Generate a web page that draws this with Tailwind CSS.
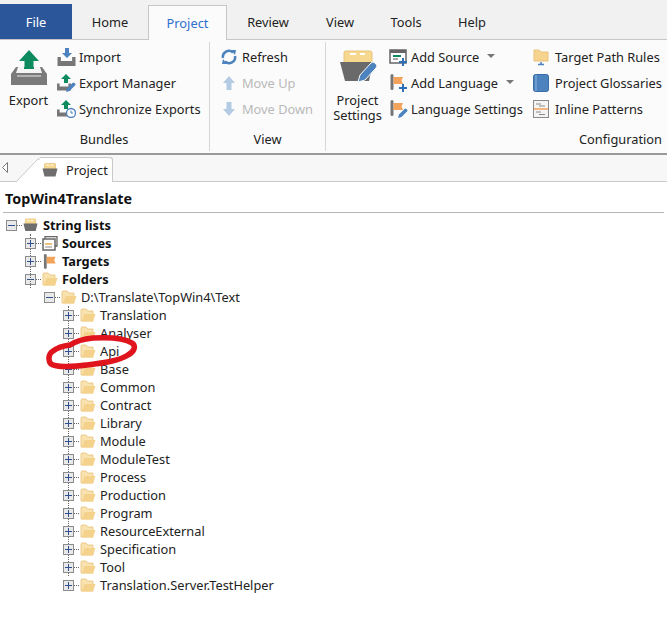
<!DOCTYPE html>
<html lang="en">
<head>
<meta charset="UTF-8">
<title>Project</title>
<script src="https://cdn.jsdelivr.net/npm/@tailwindcss/browser@4"></script>
</head>
<body class="bg-white text-[#222] font-['Noto_Sans',sans-serif] text-[12.8px] leading-[18px] whitespace-nowrap w-[667px] h-[626px] overflow-hidden relative">
<svg class="hidden">
  <symbol id="folder" viewBox="0 0 16 14"><path d="M1 13 L1 2 Q1 1 2 1 L6 1 L8 3 L13 3 L13 13 Z" fill="#f8e2b0" stroke="#e8c27a" stroke-width=".8"/><path d="M2 13.500 L4.500 6 L15.500 6 L13 13.500 Z" fill="#f4d28c"/></symbol>
  <symbol id="project" viewBox="0 0 16 14"><path d="M2.500 6 L2.500 1.500 Q2.500 .5 3.500 .5 L12.500 .5 Q13.500 .5 13.500 1.500 L13.500 6 Z" fill="#f6d88f" stroke="#e9c27b" stroke-width=".8"/><path d="M4.500 2 H7 M8.500 2 H11" stroke="#fff"/><path d="M.5 5.500 L15.500 5.500 L13.500 13.500 L2.500 13.500 Z" fill="#6e6e6e"/></symbol>
  <symbol id="flag" viewBox="0 0 16 16"><rect x="1.500" y="0" width="3" height="16" rx="1.500" fill="#777"/><path d="M4.500 3 L14 3 L12.500 6.500 L14 10 L4.500 10 Z" fill="#f4a35b"/></symbol>
  <symbol id="up" viewBox="0 0 16 16"><path d="M8 1 L14 8 L10.500 8 L10.500 15 L5.500 15 L5.500 8 L2 8 Z" fill="currentColor"/></symbol>
  <symbol id="tray" viewBox="0 0 16 8"><path d="M0 0 L3 0 L3 3.500 L13 3.500 L13 0 L16 0 L16 8 L0 8 Z" fill="#777"/></symbol>
  <symbol id="pencil" viewBox="0 0 10 10"><path d="M0 10 L1 6.500 L6.500 1 Q7.500 0 8.500 1 L9 1.500 Q10 2.500 9 3.500 L3.500 9 Z" fill="#4c82bd"/></symbol>
</svg>

<!-- tabs -->
<div class="h-[40px] bg-[#f1f1f1] border-b border-[#c6c6c6] flex items-end relative">
  <div class="w-[72px] h-[35px] bg-[#2b579a] text-white flex items-center justify-center">File</div>
  <div class="w-[76px] h-[35px] flex items-center justify-center">Home</div>
  <div class="w-[79px] h-[35px] -mb-px bg-[#fbfbfb] border border-b-0 border-[#c6c6c6] text-[#2f6fcf] flex items-center justify-center">Project</div>
  <div class="w-[82px] h-[35px] flex items-center justify-center">Review</div>
  <div class="w-[62px] h-[35px] flex items-center justify-center">View</div>
  <div class="w-[70px] h-[35px] flex items-center justify-center">Tools</div>
  <div class="w-[62px] h-[35px] flex items-center justify-center">Help</div>
</div>

<!-- ribbon -->
<div class="h-[113px] bg-[#fbfbfb] flex">
  <div class="w-[210px] border-r border-[#d6d6d6] my-[2px] flex flex-col">
    <div class="flex h-[93px]">
      <div class="w-[57px] flex flex-col items-center pt-[8px]">
        <svg class="w-[38px] h-[36px]" viewBox="0 0 38 36"><path d="M19 0 L29 11 L23.500 11 L23.500 19 L14.500 19 L14.500 11 L9 11 Z" fill="#0e8a5f"/><path d="M1 35 L1 24 L6 17 L32 17 L37 24 L37 35 Z" fill="#7a7a7a"/><path d="M8 17 L30 17 L32 23 L6 23 Z" fill="#f4f4f4"/><path d="M14 17 H24 V19 H14 Z" fill="#0e8a5f"/><path d="M7 26 H31" stroke="#d8d8d8" stroke-width="1.200"/></svg>
        <span class="mt-[5px]">Export</span>
      </div>
      <div class="flex flex-col pt-[6px] gap-[8px]">
        <div class="flex h-[18px] items-center gap-[3px]"><svg class="w-[19px] h-[18px]" viewBox="0 0 19 18"><path d="M8 0 H12 V5 H15 L10 10 L5 5 H8 Z" fill="#4c82bd"/><use href="#tray" x="0" y="9" width="19" height="9"/></svg>Import</div>
        <div class="flex h-[18px] items-center gap-[3px]"><svg class="w-[19px] h-[18px]" viewBox="0 0 19 18"><path d="M9 0 L14 5 H11 V9 H7 V5 H4 Z" fill="#0e8a5f"/><use href="#tray" x="0" y="9" width="14" height="8"/><use href="#pencil" x="9" y="8" width="10" height="10"/></svg>Export Manager</div>
        <div class="flex h-[18px] items-center gap-[3px]"><svg class="w-[19px] h-[18px]" viewBox="0 0 19 18"><path d="M9 0 L14 5 H11 V9 H7 V5 H4 Z" fill="#0e8a5f"/><use href="#tray" x="0" y="9" width="14" height="8"/><circle cx="14" cy="13" r="4.500" fill="#fff" stroke="#4c82bd" stroke-width="1.300"/><path d="M14 10.500 V13 H16" stroke="#4c82bd" fill="none"/></svg>Synchronize Exports</div>
      </div>
    </div>
    <div class="text-center pr-[1px] mt-[-5px]">Bundles</div>
  </div>
  <div class="w-[116px] border-r border-[#d6d6d6] my-[2px] flex flex-col">
    <div class="flex flex-col pt-[6px] gap-[8px] pl-[11px] h-[93px]">
      <div class="flex h-[18px] items-center gap-[5px]"><svg class="w-[16px] h-[16px]" viewBox="0 0 16 16" fill="none" stroke="#4c82bd" stroke-width="2.500"><path d="M2 9 A6 6 0 0 1 12 3.500"/><path d="M14 7 A6 6 0 0 1 4 12.500"/><path d="M10 1 L15 1 L14 6 Z M6 15 L1 15 L2 10 Z" fill="#4c82bd" stroke="none"/></svg>Refresh</div>
      <div class="flex h-[18px] items-center gap-[5px] text-[#b9b9b9]"><svg class="w-[16px] h-[16px] text-[#b3cbe3]"><use href="#up"/></svg>Move Up</div>
      <div class="flex h-[18px] items-center gap-[5px] text-[#b9b9b9]"><svg class="w-[16px] h-[16px] text-[#b3cbe3] rotate-180"><use href="#up"/></svg>Move Down</div>
    </div>
    <div class="text-center mt-[-5px]">View</div>
  </div>
  <div class="flex-1 my-[2px] flex flex-col">
    <div class="flex h-[93px]">
      <div class="w-[63px] flex flex-col items-center pt-[7px] leading-[15px] text-center">
        <svg class="w-[38px] h-[34px] mb-[10px] ml-[2px]" viewBox="0 0 38 34"><path d="M4 14 L4 4 Q4 2 6 2 L30 2 Q32 2 32 4 L32 14 Z" fill="#f6d88f" stroke="#e9c27b"/><path d="M10 5 H16 M20 5 H25" stroke="#fff" stroke-width="2"/><path d="M0 13 L33 13 L29 32 L5 32 Z" fill="#6a6a6a"/><path d="M18 33 L20 26 L31 14 Q33 12 35 14 L36 15 Q38 17 36 19 L25 31 Z" fill="#4c82bd" stroke="#fbfbfb"/></svg>
        <span>Project<br>Settings</span>
      </div>
      <div class="w-[144px] flex flex-col pt-[6px] gap-[8px]">
        <div class="flex h-[18px] items-center gap-[3px]"><svg class="w-[19px] h-[18px]" viewBox="0 0 19 18"><rect x="1" y="2" width="16" height="13" fill="#fff" stroke="#666" stroke-width="1.500"/><rect x="1" y="2" width="16" height="3" fill="#666"/><path d="M4 8 H12" stroke="#0e8a5f" stroke-width="2"/><path d="M4 11 H9" stroke="#888" stroke-width="1.500"/><path d="M14 10 V18 M10 14 H18" stroke="#2f6fb5" stroke-width="2"/></svg>Add Source<span class="ml-[5px] mt-[-3px] border-x-[4px] border-x-transparent border-t-[4px] border-t-[#777]"></span></div>
        <div class="flex h-[18px] items-center gap-[3px]"><svg class="w-[19px] h-[18px]" viewBox="0 0 19 18"><use href="#flag" width="16" height="16"/><path d="M14 10 V18 M10 14 H18" stroke="#2f6fb5" stroke-width="2"/></svg>Add Language<span class="ml-[5px] mt-[-3px] border-x-[4px] border-x-transparent border-t-[4px] border-t-[#777]"></span></div>
        <div class="flex h-[18px] items-center gap-[3px]"><svg class="w-[19px] h-[18px]" viewBox="0 0 19 18"><use href="#flag" width="16" height="16"/><use href="#pencil" x="9" y="8" width="10" height="10"/></svg>Language Settings</div>
      </div>
      <div class="flex flex-col pt-[6px] gap-[8px]">
        <div class="flex h-[18px] items-center gap-[6px]"><svg class="w-[16px] h-[18px]" viewBox="0 0 16 18"><path d="M1 2 H6 L8 4 H15 V13 H1 Z" fill="#f5d48f" stroke="#e9c27b"/><path d="M8 14 V16 M5 16.500 H11" stroke="#4c82bd" stroke-width="1.500"/></svg>Target Path Rules</div>
        <div class="flex h-[18px] items-center gap-[6px]"><svg class="w-[16px] h-[18px]" viewBox="0 0 16 18"><rect x="0.500" y="0.500" width="15" height="17" rx="2" fill="#4c82bd" stroke="#3a6da5"/><path d="M3 1 V17" stroke="#8fb4da"/></svg>Project Glossaries</div>
        <div class="flex h-[18px] items-center gap-[6px]"><svg class="w-[16px] h-[18px]" viewBox="0 0 16 18"><rect x="0.500" y="0.500" width="15" height="17" fill="#f4f4f4" stroke="#8a8a8a"/><path d="M3 4 H8 M6 6 H12" stroke="#8a8a8a"/><path d="M1 9 H15" stroke="#f4a35b" stroke-width="1.500"/><path d="M3 12 H8 M6 14.500 H12" stroke="#8a8a8a"/></svg>Inline Patterns</div>
      </div>
    </div>
    <div class="text-right pr-[5px] mt-[-5px]">Configuration</div>
  </div>
</div>
<div class="h-[2px] bg-[#9a9a9a]"></div>

<!-- document tab -->
<div class="h-[27px] bg-[#f7f7f7] border-b border-[#c9c9c9] relative flex items-end">
  <svg class="absolute left-[2px] top-[7px] w-[6px] h-[11px]" viewBox="0 0 6 11"><path d="M5.500 .5 L.5 5.500 L5.500 10.500 Z" fill="#fff" stroke="#777"/></svg>
  <svg class="absolute left-[16px] top-[2px] w-[24px] h-[25px]" viewBox="0 0 24 25"><path d="M0 25 L22 2 L24 2 V25 Z" fill="#fff"/><path d="M0 25 L22 2 L24 2" fill="none" stroke="#c9c9c9"/></svg>
  <div class="absolute left-[40px] top-[2px] w-[73px] h-[25px] bg-white border border-l-0 border-b-0 border-[#c9c9c9] rounded-tr-[3px] flex items-center">
    <svg class="w-[16px] h-[14px] ml-[2px]"><use href="#project"/></svg><span class="ml-[8px]">Project</span>
  </div>
</div>

<!-- tree panel -->
<div class="px-[3px] pt-[7px]">
  <div class="font-bold text-[14.300px] leading-[20px] pl-[2px] pb-[3px] border-b border-[#b5b5b5] text-[#111]">TopWin4Translate</div>
</div>
<div class="relative pl-[6px] pt-[3px]">
  <div class="relative">
    <div class="flex h-[18px] items-center font-bold text-[#111]"><span class="w-[11px] h-[11px] bg-[#e9e9e9] border border-[#8c8c8c] flex items-center justify-center"><i class="w-[7px] h-px bg-[#2f4f8f]"></i></span><i class="w-[5px] border-t border-dotted border-[#666]"></i><svg class="w-[15px] h-[14px] ml-px mr-[5px]"><use href="#project"/></svg>String lists</div>
    <div class="absolute left-[24px] top-[18px] h-[54px] border-l border-dotted border-[#666]"></div>
    <div class="pl-[19px]">
      <div class="flex h-[18px] items-center font-bold text-[#111]"><span class="w-[11px] h-[11px] bg-[#e9e9e9] border border-[#8c8c8c] flex items-center justify-center relative"><i class="w-[7px] h-px bg-[#2f4f8f]"></i><i class="absolute w-px h-[7px] bg-[#2f4f8f]"></i></span><i class="w-[5px] border-t border-dotted border-[#666]"></i><svg class="w-[16px] h-[15px] ml-px mr-[4px]" viewBox="0 0 16 15"><path d="M3 3 V.5 H15 V10 H13" fill="none" stroke="#666" stroke-width="1.300"/><rect x="1" y="3" width="12" height="11" fill="#fff" stroke="#666" stroke-width="1.500"/><path d="M3 8 H10" stroke="#e9c27b" stroke-width="2"/><path d="M3 11 H10" stroke="#888"/></svg>Sources</div>
      <div class="flex h-[18px] items-center font-bold text-[#111]"><span class="w-[11px] h-[11px] bg-[#e9e9e9] border border-[#8c8c8c] flex items-center justify-center relative"><i class="w-[7px] h-px bg-[#2f4f8f]"></i><i class="absolute w-px h-[7px] bg-[#2f4f8f]"></i></span><i class="w-[5px] border-t border-dotted border-[#666]"></i><svg class="w-[16px] h-[15px] ml-px mr-[4px]"><use href="#flag"/></svg>Targets</div>
      <div class="flex h-[18px] items-center font-bold text-[#111]"><span class="w-[11px] h-[11px] bg-[#e9e9e9] border border-[#8c8c8c] flex items-center justify-center"><i class="w-[7px] h-px bg-[#2f4f8f]"></i></span><i class="w-[5px] border-t border-dotted border-[#666]"></i><svg class="w-[16px] h-[14px] ml-px mr-[4px]"><use href="#folder"/></svg>Folders</div>
      <div class="pl-[19px]">
        <div class="flex h-[18px] items-center"><span class="w-[11px] h-[11px] bg-[#e9e9e9] border border-[#8c8c8c] flex items-center justify-center"><i class="w-[7px] h-px bg-[#2f4f8f]"></i></span><i class="w-[5px] border-t border-dotted border-[#666]"></i><svg class="w-[16px] h-[14px] ml-px mr-[4px]"><use href="#folder"/></svg>D:\Translate\TopWin4\Text</div>
        <div class="relative pl-[19px]">
          <div class="absolute left-[24px] top-0 h-[270px] border-l border-dotted border-[#666]"></div>
          <div class="flex h-[18px] items-center relative"><span class="w-[11px] h-[11px] bg-[#e9e9e9] border border-[#8c8c8c] flex items-center justify-center relative"><i class="w-[7px] h-px bg-[#2f4f8f]"></i><i class="absolute w-px h-[7px] bg-[#2f4f8f]"></i></span><i class="w-[5px] border-t border-dotted border-[#666]"></i><svg class="w-[16px] h-[14px] ml-px mr-[4px]"><use href="#folder"/></svg>Translation</div>
          <div class="flex h-[18px] items-center relative"><span class="w-[11px] h-[11px] bg-[#e9e9e9] border border-[#8c8c8c] flex items-center justify-center relative"><i class="w-[7px] h-px bg-[#2f4f8f]"></i><i class="absolute w-px h-[7px] bg-[#2f4f8f]"></i></span><i class="w-[5px] border-t border-dotted border-[#666]"></i><svg class="w-[16px] h-[14px] ml-px mr-[4px]"><use href="#folder"/></svg>Analyser</div>
          <div class="flex h-[18px] items-center relative"><span class="w-[11px] h-[11px] bg-[#e9e9e9] border border-[#8c8c8c] flex items-center justify-center relative"><i class="w-[7px] h-px bg-[#2f4f8f]"></i><i class="absolute w-px h-[7px] bg-[#2f4f8f]"></i></span><i class="w-[5px] border-t border-dotted border-[#666]"></i><svg class="w-[16px] h-[14px] ml-px mr-[4px]"><use href="#folder"/></svg>Api</div>
          <div class="flex h-[18px] items-center relative"><span class="w-[11px] h-[11px] bg-[#e9e9e9] border border-[#8c8c8c] flex items-center justify-center relative"><i class="w-[7px] h-px bg-[#2f4f8f]"></i><i class="absolute w-px h-[7px] bg-[#2f4f8f]"></i></span><i class="w-[5px] border-t border-dotted border-[#666]"></i><svg class="w-[16px] h-[14px] ml-px mr-[4px]"><use href="#folder"/></svg>Base</div>
          <div class="flex h-[18px] items-center relative"><span class="w-[11px] h-[11px] bg-[#e9e9e9] border border-[#8c8c8c] flex items-center justify-center relative"><i class="w-[7px] h-px bg-[#2f4f8f]"></i><i class="absolute w-px h-[7px] bg-[#2f4f8f]"></i></span><i class="w-[5px] border-t border-dotted border-[#666]"></i><svg class="w-[16px] h-[14px] ml-px mr-[4px]"><use href="#folder"/></svg>Common</div>
          <div class="flex h-[18px] items-center relative"><span class="w-[11px] h-[11px] bg-[#e9e9e9] border border-[#8c8c8c] flex items-center justify-center relative"><i class="w-[7px] h-px bg-[#2f4f8f]"></i><i class="absolute w-px h-[7px] bg-[#2f4f8f]"></i></span><i class="w-[5px] border-t border-dotted border-[#666]"></i><svg class="w-[16px] h-[14px] ml-px mr-[4px]"><use href="#folder"/></svg>Contract</div>
          <div class="flex h-[18px] items-center relative"><span class="w-[11px] h-[11px] bg-[#e9e9e9] border border-[#8c8c8c] flex items-center justify-center relative"><i class="w-[7px] h-px bg-[#2f4f8f]"></i><i class="absolute w-px h-[7px] bg-[#2f4f8f]"></i></span><i class="w-[5px] border-t border-dotted border-[#666]"></i><svg class="w-[16px] h-[14px] ml-px mr-[4px]"><use href="#folder"/></svg>Library</div>
          <div class="flex h-[18px] items-center relative"><span class="w-[11px] h-[11px] bg-[#e9e9e9] border border-[#8c8c8c] flex items-center justify-center relative"><i class="w-[7px] h-px bg-[#2f4f8f]"></i><i class="absolute w-px h-[7px] bg-[#2f4f8f]"></i></span><i class="w-[5px] border-t border-dotted border-[#666]"></i><svg class="w-[16px] h-[14px] ml-px mr-[4px]"><use href="#folder"/></svg>Module</div>
          <div class="flex h-[18px] items-center relative"><span class="w-[11px] h-[11px] bg-[#e9e9e9] border border-[#8c8c8c] flex items-center justify-center relative"><i class="w-[7px] h-px bg-[#2f4f8f]"></i><i class="absolute w-px h-[7px] bg-[#2f4f8f]"></i></span><i class="w-[5px] border-t border-dotted border-[#666]"></i><svg class="w-[16px] h-[14px] ml-px mr-[4px]"><use href="#folder"/></svg>ModuleTest</div>
          <div class="flex h-[18px] items-center relative"><span class="w-[11px] h-[11px] bg-[#e9e9e9] border border-[#8c8c8c] flex items-center justify-center relative"><i class="w-[7px] h-px bg-[#2f4f8f]"></i><i class="absolute w-px h-[7px] bg-[#2f4f8f]"></i></span><i class="w-[5px] border-t border-dotted border-[#666]"></i><svg class="w-[16px] h-[14px] ml-px mr-[4px]"><use href="#folder"/></svg>Process</div>
          <div class="flex h-[18px] items-center relative"><span class="w-[11px] h-[11px] bg-[#e9e9e9] border border-[#8c8c8c] flex items-center justify-center relative"><i class="w-[7px] h-px bg-[#2f4f8f]"></i><i class="absolute w-px h-[7px] bg-[#2f4f8f]"></i></span><i class="w-[5px] border-t border-dotted border-[#666]"></i><svg class="w-[16px] h-[14px] ml-px mr-[4px]"><use href="#folder"/></svg>Production</div>
          <div class="flex h-[18px] items-center relative"><span class="w-[11px] h-[11px] bg-[#e9e9e9] border border-[#8c8c8c] flex items-center justify-center relative"><i class="w-[7px] h-px bg-[#2f4f8f]"></i><i class="absolute w-px h-[7px] bg-[#2f4f8f]"></i></span><i class="w-[5px] border-t border-dotted border-[#666]"></i><svg class="w-[16px] h-[14px] ml-px mr-[4px]"><use href="#folder"/></svg>Program</div>
          <div class="flex h-[18px] items-center relative"><span class="w-[11px] h-[11px] bg-[#e9e9e9] border border-[#8c8c8c] flex items-center justify-center relative"><i class="w-[7px] h-px bg-[#2f4f8f]"></i><i class="absolute w-px h-[7px] bg-[#2f4f8f]"></i></span><i class="w-[5px] border-t border-dotted border-[#666]"></i><svg class="w-[16px] h-[14px] ml-px mr-[4px]"><use href="#folder"/></svg>ResourceExternal</div>
          <div class="flex h-[18px] items-center relative"><span class="w-[11px] h-[11px] bg-[#e9e9e9] border border-[#8c8c8c] flex items-center justify-center relative"><i class="w-[7px] h-px bg-[#2f4f8f]"></i><i class="absolute w-px h-[7px] bg-[#2f4f8f]"></i></span><i class="w-[5px] border-t border-dotted border-[#666]"></i><svg class="w-[16px] h-[14px] ml-px mr-[4px]"><use href="#folder"/></svg>Specification</div>
          <div class="flex h-[18px] items-center relative"><span class="w-[11px] h-[11px] bg-[#e9e9e9] border border-[#8c8c8c] flex items-center justify-center relative"><i class="w-[7px] h-px bg-[#2f4f8f]"></i><i class="absolute w-px h-[7px] bg-[#2f4f8f]"></i></span><i class="w-[5px] border-t border-dotted border-[#666]"></i><svg class="w-[16px] h-[14px] ml-px mr-[4px]"><use href="#folder"/></svg>Tool</div>
          <div class="flex h-[18px] items-center relative"><span class="w-[11px] h-[11px] bg-[#e9e9e9] border border-[#8c8c8c] flex items-center justify-center relative"><i class="w-[7px] h-px bg-[#2f4f8f]"></i><i class="absolute w-px h-[7px] bg-[#2f4f8f]"></i></span><i class="w-[5px] border-t border-dotted border-[#666]"></i><svg class="w-[16px] h-[14px] ml-px mr-[4px]"><use href="#folder"/></svg>Translation.Server.TestHelper</div>
        </div>
      </div>
    </div>
  </div>
</div>

<!-- red marker annotation -->
<svg class="absolute left-[45px] top-[334px] w-[95px] h-[38px]" viewBox="0 0 95 38" fill="none"><path d="M25 11 C17 12 12 14 8 17 C3 20 3 27 6 30 C10 33 26 33 42 31 C58 29 74 27 83 21 C90 17 91 12 87 9 C81 5 66 3 48 4 C38 5 31 7 25 11" stroke="#e0141c" stroke-width="5.500" stroke-linecap="round"/></svg>
</body>
</html>
